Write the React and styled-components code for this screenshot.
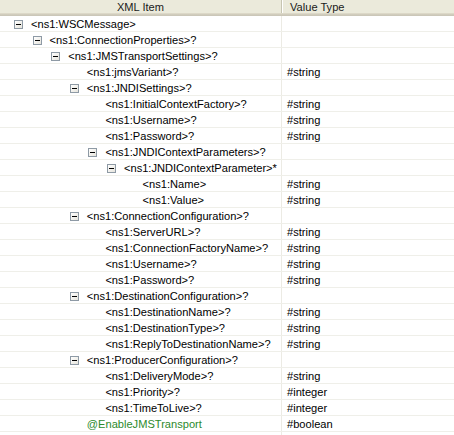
import styled, { createGlobalStyle } from "styled-components";

const GlobalStyle = createGlobalStyle`
  html, body {
    margin: 0;
    padding: 0;
    background: #ffffff;
  }
  body {
    font-family: "Liberation Sans", Arial, sans-serif;
    font-size: 11.1px;
    color: #000000;
  }
`;

const rows = [
  { level: 0, label: "<ns1:WSCMessage>", toggle: true },
  { level: 1, label: "<ns1:ConnectionProperties>?", toggle: true },
  { level: 2, label: "<ns1:JMSTransportSettings>?", toggle: true },
  { level: 3, label: "<ns1:jmsVariant>?", type: "#string" },
  { level: 3, label: "<ns1:JNDISettings>?", toggle: true },
  { level: 4, label: "<ns1:InitialContextFactory>?", type: "#string" },
  { level: 4, label: "<ns1:Username>?", type: "#string" },
  { level: 4, label: "<ns1:Password>?", type: "#string" },
  { level: 4, label: "<ns1:JNDIContextParameters>?", toggle: true },
  { level: 5, label: "<ns1:JNDIContextParameter>*", toggle: true },
  { level: 6, label: "<ns1:Name>", type: "#string" },
  { level: 6, label: "<ns1:Value>", type: "#string" },
  { level: 3, label: "<ns1:ConnectionConfiguration>?", toggle: true },
  { level: 4, label: "<ns1:ServerURL>?", type: "#string" },
  { level: 4, label: "<ns1:ConnectionFactoryName>?", type: "#string" },
  { level: 4, label: "<ns1:Username>?", type: "#string" },
  { level: 4, label: "<ns1:Password>?", type: "#string" },
  { level: 3, label: "<ns1:DestinationConfiguration>?", toggle: true },
  { level: 4, label: "<ns1:DestinationName>?", type: "#string" },
  { level: 4, label: "<ns1:DestinationType>?", type: "#string" },
  { level: 4, label: "<ns1:ReplyToDestinationName>?", type: "#string" },
  { level: 3, label: "<ns1:ProducerConfiguration>?", toggle: true },
  { level: 4, label: "<ns1:DeliveryMode>?", type: "#string" },
  { level: 4, label: "<ns1:Priority>?", type: "#integer" },
  { level: 4, label: "<ns1:TimeToLive>?", type: "#integer" },
  { level: 3, label: "@EnableJMSTransport", type: "#boolean", attr: true },
];

const App = () => {
  return (
    <>
      <GlobalStyle />
      <Tree>
        <Header>
          <HeaderCell $center>XML Item</HeaderCell>
          <HeaderCell>Value Type</HeaderCell>
        </Header>
        {rows.map((row, i) => (
          <Row key={i}>
            <ItemCell $level={row.level}>
              {row.toggle ? <Toggle /> : <Spacer />}
              <Label $attr={row.attr}>{row.label}</Label>
            </ItemCell>
            <TypeCell>{row.type}</TypeCell>
          </Row>
        ))}
        <Filler>
          <div />
          <div />
        </Filler>
      </Tree>
    </>
  );
};

export default App;

const Tree = styled.div`
  width: 454px;
  height: 435px;
  display: flex;
  flex-direction: column;
  background: #ffffff;
  overflow: hidden;
`;

const Header = styled.div`
  display: grid;
  grid-template-columns: 282px 1fr;
  height: 16px;
  flex: none;
  box-sizing: border-box;
  background: linear-gradient(
    to bottom,
    #ebeadb 0px,
    #ebeadb 13px,
    #e2decd 13px,
    #d6d2c2 14px,
    #cbc7b8 15px
  );
`;

const HeaderCell = styled.div`
  height: 13px;
  padding-top: 1px;
  line-height: 13px;
  color: #1a1a1a;
  text-align: ${(p) => (p.$center ? "center" : "left")};
  padding-left: ${(p) => (p.$center ? "0" : "8px")};
  border-right: ${(p) => (p.$center ? "1px solid #c7c5b2" : "none")};
  box-shadow: ${(p) => (p.$center ? "1px 0 0 #ffffff" : "none")};
  box-sizing: border-box;
`;

const Row = styled.div`
  display: grid;
  grid-template-columns: 282px 1fr;
  height: 16px;
  flex: none;
  box-sizing: border-box;
  border-bottom: 1px solid #efefe9;
`;

const ItemCell = styled.div`
  display: flex;
  align-items: center;
  padding-left: ${(p) => 14 + p.$level * 18.6}px;
  padding-top: 2px;
  border-right: 1px solid #ecebe4;
  white-space: nowrap;
  overflow: hidden;
`;

const Toggle = styled.span`
  position: relative;
  flex: none;
  width: 9px;
  height: 9px;
  box-sizing: border-box;
  margin-right: 8px;
  margin-top: -1px;
  border: 1px solid #8e9aa5;
  background: linear-gradient(135deg, #ffffff 0%, #e6e4dc 100%);
  &::after {
    content: "";
    position: absolute;
    left: 1px;
    top: 3px;
    width: 5px;
    height: 1px;
    background: #000000;
  }
`;

const Spacer = styled.span`
  flex: none;
  width: 17px;
`;

const Label = styled.span`
  line-height: 13px;
  color: ${(p) => (p.$attr ? "#2c8a2c" : "#000000")};
`;

const TypeCell = styled.div`
  display: flex;
  align-items: center;
  padding-left: 5px;
  padding-top: 2px;
  line-height: 13px;
  white-space: nowrap;
`;

const Filler = styled.div`
  flex: 1;
  display: grid;
  grid-template-columns: 282px 1fr;
  & > div:first-child {
    border-right: 1px solid #ecebe4;
  }
`;
